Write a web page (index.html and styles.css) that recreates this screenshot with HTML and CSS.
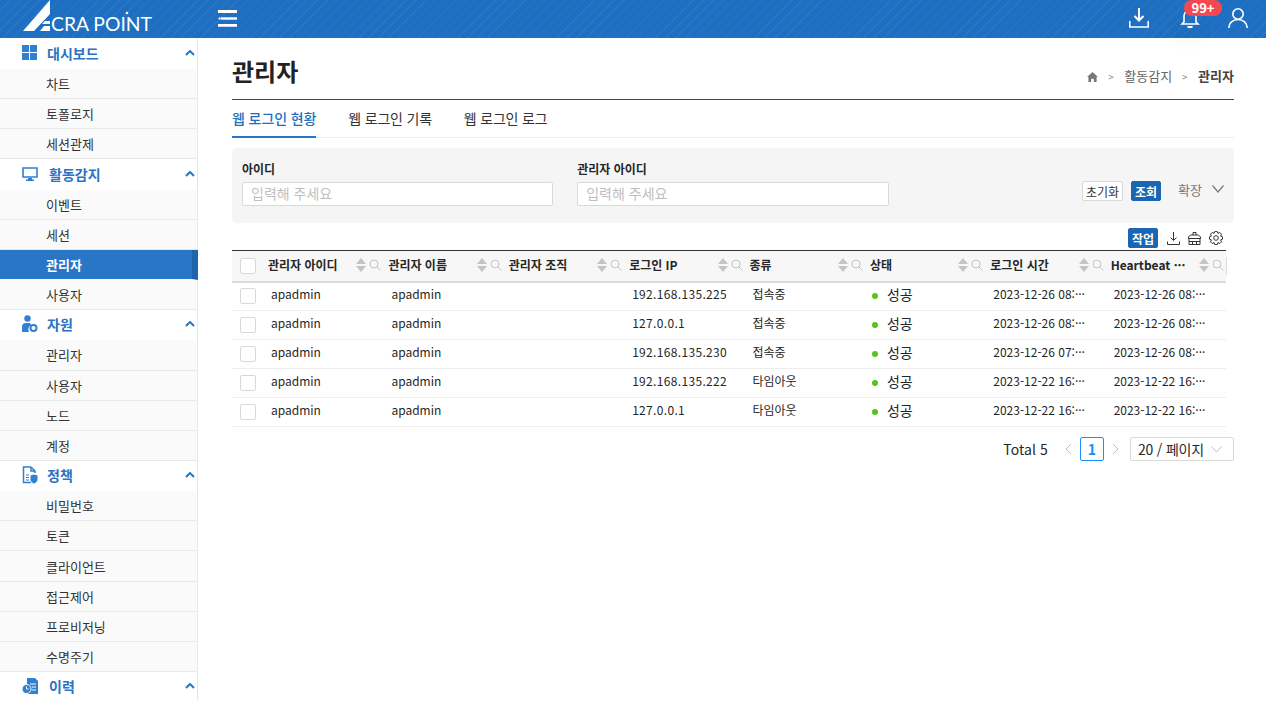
FILE: index.html
```html
<!DOCTYPE html>
<html lang="ko">
<head>
    <meta charset="UTF-8">
    <meta name="viewport" content="width=device-width, initial-scale=1.0">
    <title>관리자</title>
    <link rel="stylesheet" href="styles.css">
</head>
<body>

<svg class="defs" width="0" height="0">
    <symbol id="chev" viewBox="0 0 10 6"><path d="M1 5l4-4 4 4" fill="none" stroke="#2a75c7" stroke-width="2"/></symbol>
    <symbol id="sort" viewBox="0 0 10 14"><path d="M5 0l5 6H0zM5 14L0 8h10z" fill="#c4c4c4"/></symbol>
    <symbol id="find" viewBox="0 0 12 12"><circle cx="5" cy="5" r="4" fill="none" stroke="#c4c4c4"/><path d="M8 8l3.500 3.500" stroke="#c4c4c4"/></symbol>
</svg>

<header class="topbar">
    <svg class="logo" width="132" height="38" viewBox="0 0 132 38">
        <path d="M0 31L27 0v14L11 31zM22 21h5v3h-8zM17 31l4-5h6v5z" fill="#fff"/>
        <text x="28" y="31" class="logo-text" textLength="101" lengthAdjust="spacingAndGlyphs">CRA POINT</text>
        <circle cx="104" cy="13" r="1.300" fill="#fff"/>
    </svg>
    <svg class="menu-toggle" width="19" height="18" viewBox="0 0 19 18">
        <path d="M0 1.500h19M0 15.300h19" stroke="#fff" stroke-width="2.800"/>
        <path d="M2.500 8.500H19" stroke="#fff" stroke-width="2.400"/>
        <path d="M0 8.500l1.800-1.500v3z" fill="#fff"/>
    </svg>
    <div class="top-icons">
        <svg width="20" height="20" viewBox="0 0 20 20">
            <path d="M10 0v12M5.500 8l4.500 4.500L14.500 8" fill="none" stroke="#fff" stroke-width="2"/>
            <path d="M.8 13v6h18.400v-6" fill="none" stroke="#fff" stroke-width="1.600"/>
        </svg>
        <div class="bell">
            <svg width="20" height="20" viewBox="0 0 20 20">
                <path d="M4 14V8a6 6 0 0 1 12 0v6l2 2H2z" fill="none" stroke="#fff" stroke-width="1.600"/>
                <path d="M7.500 18h5v2h-5z" fill="#fff"/>
            </svg>
            <span class="badge">99+</span>
        </div>
        <svg width="20" height="20" viewBox="0 0 20 20">
            <circle cx="10" cy="6" r="5.200" fill="none" stroke="#fff" stroke-width="1.600"/>
            <path d="M.8 20c0-5 4-8.500 9.200-8.500s9.200 3.500 9.200 8.500" fill="none" stroke="#fff" stroke-width="1.600"/>
        </svg>
    </div>
</header>

<div class="layout">
    <nav class="sidebar">
        <div class="group">
            <svg class="group-icon" width="16" height="15" viewBox="0 0 16 15"><path d="M0 0h7v7H0zM8 0h7v7H8zM0 8h7v7H0zM8 8h7v7H8z" fill="#2f7fd3"/></svg>
            <span>대시보드</span>
            <svg class="chev" width="10" height="6"><use href="#chev"/></svg>
        </div>
        <a class="item">차트</a>
        <a class="item">토폴로지</a>
        <a class="item">세션관제</a>

        <div class="group wide">
            <svg class="group-icon" width="16" height="14" viewBox="0 0 16 14"><path d="M1 1h14v9H1z" fill="none" stroke="#2f7fd3" stroke-width="1.600"/><path d="M6 11h4v1.500h2V14H4v-1.500h2z" fill="#2f7fd3"/></svg>
            <span>활동감지</span>
            <svg class="chev" width="10" height="6"><use href="#chev"/></svg>
        </div>
        <a class="item">이벤트</a>
        <a class="item">세션</a>
        <a class="item active">관리자</a>
        <a class="item">사용자</a>

        <div class="group">
            <svg class="group-icon" width="16" height="18" viewBox="0 0 16 18"><circle cx="5.500" cy="3.500" r="3.200" fill="#2f7fd3"/><path d="M0 17v-5a4 4 0 0 1 4-4h4l1 2a5 5 0 0 0-2 7z" fill="#2f7fd3"/><circle cx="11.500" cy="13" r="3" fill="none" stroke="#2f7fd3" stroke-width="2"/></svg>
            <span>자원</span>
            <svg class="chev" width="10" height="6"><use href="#chev"/></svg>
        </div>
        <a class="item">관리자</a>
        <a class="item">사용자</a>
        <a class="item">노드</a>
        <a class="item">계정</a>

        <div class="group">
            <svg class="group-icon" width="16" height="18" viewBox="0 0 16 18"><path d="M9 1H1.500v15.500H9M9 1l4 4v2M9 1v4h4" fill="none" stroke="#2f7fd3" stroke-width="1.500"/><path d="M4 9h3M4 11.500h3M4 14h3" stroke="#2f7fd3"/><path d="M8.500 9.500l3.500-1 3.500 1v4c0 2-2 3.500-3.500 4-1.500-.5-3.500-2-3.500-4z" fill="#2f7fd3"/></svg>
            <span>정책</span>
            <svg class="chev" width="10" height="6"><use href="#chev"/></svg>
        </div>
        <a class="item">비밀번호</a>
        <a class="item">토큰</a>
        <a class="item">클라이언트</a>
        <a class="item">접근제어</a>
        <a class="item">프로비저닝</a>
        <a class="item">수명주기</a>

        <div class="group wide">
            <svg class="group-icon" width="16" height="16" viewBox="0 0 16 16"><path d="M5 0h8l3 3v13H5z" fill="#2f7fd3"/><path d="M8 6h6M10 9h4M10 12h4" stroke="#fff"/><circle cx="4.500" cy="11" r="4.500" fill="#2f7fd3" stroke="#fff"/><path d="M4.500 8.500V11h2" fill="none" stroke="#fff"/></svg>
            <span>이력</span>
            <svg class="chev" width="10" height="6"><use href="#chev"/></svg>
        </div>
    </nav>

    <main class="content">
        <div class="title-row">
            <h1>관리자</h1>
            <div class="crumbs">
                <svg width="11" height="10" viewBox="0 0 12 11"><path d="M6 0l6 5.500h-1.500V11H7.500V7.500h-3V11h-3V5.500H0z" fill="#777"/></svg>
                <span class="sep">&gt;</span>
                <span>활동감지</span>
                <span class="sep">&gt;</span>
                <b>관리자</b>
            </div>
        </div>

        <div class="tabs">
            <a class="tab on">웹 로그인 현황</a>
            <a class="tab">웹 로그인 기록</a>
            <a class="tab">웹 로그인 로그</a>
        </div>

        <form class="search">
            <label class="field">
                <span>아이디</span>
                <input placeholder="입력해 주세요">
            </label>
            <label class="field">
                <span>관리자 아이디</span>
                <input placeholder="입력해 주세요">
            </label>
            <div class="search-actions">
                <button type="button" class="btn">초기화</button>
                <button type="button" class="btn primary">조회</button>
                <span class="expand">확장
                    <svg width="12" height="8" viewBox="0 0 12 8"><path d="M.5.500L6 7l5.500-6.500" fill="none" stroke="#777" stroke-width="1.200"/></svg>
                </span>
            </div>
        </form>

        <div class="tools">
            <button type="button" class="btn primary">작업</button>
            <svg width="13" height="13" viewBox="0 0 13 13"><path d="M6.500 0v8M3.500 5.500l3 3 3-3M.5 9.500v3h12v-3" fill="none" stroke="#333"/></svg>
            <svg width="13" height="13" viewBox="0 0 13 13"><path d="M5 3V.5h3V3M.5 6.500V5l2-2h8l2 2v1.500zM1 6.500v6h11v-6M1 9.500h11M4.500 9.500v3M8.500 9.500v3" fill="none" stroke="#333"/></svg>
            <svg width="14" height="14" viewBox="0 0 14 14"><circle cx="7" cy="7" r="2.300" fill="none" stroke="#333"/><path d="M13.600 5.840v2.320l-1.980.75.87 1.930-1.650 1.650-1.930-.87-.75 1.980H5.840l-.75-1.980-1.930.87-1.650-1.650.87-1.930L.4 8.160V5.840l1.980-.75-.87-1.930 1.650-1.650 1.930.87.750-1.980h2.320l.75 1.980 1.930-.87 1.650 1.650-.87 1.930z" fill="none" stroke="#333"/></svg>
        </div>

        <table class="grid">
            <thead>
                <tr>
                    <th class="check"><i class="box"></i></th>
                    <th><div class="head"><span class="name">관리자 아이디</span><svg width="10" height="14"><use href="#sort"/></svg><svg width="12" height="12"><use href="#find"/></svg></div></th>
                    <th><div class="head"><span class="name">관리자 이름</span><svg width="10" height="14"><use href="#sort"/></svg><svg width="12" height="12"><use href="#find"/></svg></div></th>
                    <th><div class="head"><span class="name">관리자 조직</span><svg width="10" height="14"><use href="#sort"/></svg><svg width="12" height="12"><use href="#find"/></svg></div></th>
                    <th><div class="head"><span class="name">로그인 IP</span><svg width="10" height="14"><use href="#sort"/></svg><svg width="12" height="12"><use href="#find"/></svg></div></th>
                    <th><div class="head"><span class="name">종류</span><svg width="10" height="14"><use href="#sort"/></svg><svg width="12" height="12"><use href="#find"/></svg></div></th>
                    <th><div class="head"><span class="name">상태</span><svg width="10" height="14"><use href="#sort"/></svg><svg width="12" height="12"><use href="#find"/></svg></div></th>
                    <th><div class="head"><span class="name">로그인 시간</span><svg width="10" height="14"><use href="#sort"/></svg><svg width="12" height="12"><use href="#find"/></svg></div></th>
                    <th><div class="head"><span class="name">Heartbeat ···</span><svg width="10" height="14"><use href="#sort"/></svg><svg width="12" height="12"><use href="#find"/></svg></div></th>
                </tr>
            </thead>
            <tbody>
                <tr><td class="check"><i class="box"></i></td><td>apadmin</td><td>apadmin</td><td></td><td class="ip">192.168.135.225</td><td>접속중</td><td><i class="dot"></i><span class="status">성공</span></td><td>2023-12-26 08:···</td><td>2023-12-26 08:···</td></tr>
                <tr><td class="check"><i class="box"></i></td><td>apadmin</td><td>apadmin</td><td></td><td class="ip">127.0.0.1</td><td>접속중</td><td><i class="dot"></i><span class="status">성공</span></td><td>2023-12-26 08:···</td><td>2023-12-26 08:···</td></tr>
                <tr><td class="check"><i class="box"></i></td><td>apadmin</td><td>apadmin</td><td></td><td class="ip">192.168.135.230</td><td>접속중</td><td><i class="dot"></i><span class="status">성공</span></td><td>2023-12-26 07:···</td><td>2023-12-26 08:···</td></tr>
                <tr><td class="check"><i class="box"></i></td><td>apadmin</td><td>apadmin</td><td></td><td class="ip">192.168.135.222</td><td>타임아웃</td><td><i class="dot"></i><span class="status">성공</span></td><td>2023-12-22 16:···</td><td>2023-12-22 16:···</td></tr>
                <tr><td class="check"><i class="box"></i></td><td>apadmin</td><td>apadmin</td><td></td><td class="ip">127.0.0.1</td><td>타임아웃</td><td><i class="dot"></i><span class="status">성공</span></td><td>2023-12-22 16:···</td><td>2023-12-22 16:···</td></tr>
            </tbody>
        </table>

        <div class="pager">
            <span class="total">Total 5</span>
            <svg width="8" height="12" viewBox="0 0 8 12"><path d="M7 1L2 6l5 5" fill="none" stroke="#bbb"/></svg>
            <span class="page">1</span>
            <svg width="8" height="12" viewBox="0 0 8 12"><path d="M1 1l5 5-5 5" fill="none" stroke="#bbb"/></svg>
            <span class="size">20 / 페이지
                <svg width="11" height="7" viewBox="0 0 11 7"><path d="M.5.500l5 5.500 5-5.500" fill="none" stroke="#bbb"/></svg>
            </span>
        </div>
    </main>
</div>

</body>
</html>
```

FILE: styles.css
```css
* {
    box-sizing: border-box;
}
html, body {
    height: 701px;
    overflow: hidden;
}
body {
    margin: 0;
    font-family: "Noto Sans CJK KR", "Noto Sans", sans-serif;
    font-size: 13px;
    color: #262626;
    background: #fff;
}
.defs {
    position: absolute;
}

/* top bar */
.topbar {
    height: 38px;
    display: flex;
    align-items: center;
    padding-left: 23px;
    background-color: #1e6fc2;
    background-image: repeating-linear-gradient(135deg, rgba(255,255,255,0.05) 0 1px, transparent 1px 7px);
}
.logo {
    display: block;
    flex: none;
}
.logo-text {
    font-family: "Lato", sans-serif;
    font-size: 20px;
    font-weight: 400;
    fill: #fff;
}
.menu-toggle {
    flex: none;
    margin-left: 63px;
}
.top-icons {
    margin-left: auto;
    margin-right: 18px;
    margin-top: -2px;
    display: flex;
    align-items: center;
    gap: 28px;
}
.top-icons svg {
    display: block;
}
.bell {
    position: relative;
    margin-left: 3px;
    border-radius: 50%;
    box-shadow: 0 14px 18px rgba(0,0,0,0.06);
}
.badge {
    position: absolute;
    top: -8px;
    left: 4px;
    width: 38px;
    height: 16px;
    line-height: 15px;
    border-radius: 8px;
    background: #f5484f;
    color: #fff;
    font-size: 13px;
    font-weight: 700;
    text-align: center;
}

/* sidebar */
.layout {
    display: flex;
    height: 663px;
}
.sidebar {
    flex: none;
    width: 198px;
    padding-top: 0.8px;
    border-right: 1px solid #e8e8e8;
}
.group {
    height: 30.17px;
    display: flex;
    align-items: center;
    padding: 0 0 2px 22px;
    color: #2a72c4;
    font-size: 14px;
    font-weight: 700;
}
.group-icon {
    flex: none;
    width: 16px;
    margin-right: 9px;
}
.group.wide .group-icon {
    margin-right: 11px;
}
.chev {
    margin-left: auto;
    margin-right: 2px;
}
.item {
    display: flex;
    align-items: center;
    height: 30.17px;
    padding-left: 46px;
    background: #fafafa;
    border-bottom: 1px solid #e8e8e8;
    color: #333;
}
.item.active {
    margin-right: -1px;
    background: #2976c6;
    border-right: 6px solid #1f65ad;
    border-bottom-color: #fafafa;
    color: #fff;
    font-weight: 700;
}

/* main area */
.content {
    flex: 1;
    min-width: 0;
    padding: 0 32px 0 34px;
}
.title-row {
    height: 62px;
    display: flex;
    justify-content: space-between;
    align-items: center;
    padding-top: 4px;
    border-bottom: 1px solid #34495e;
}
h1 {
    margin: 0;
    font-size: 24px;
    font-weight: 700;
    color: #222;
}
.crumbs {
    display: flex;
    align-items: center;
    gap: 10px;
    padding-top: 10px;
    color: #666;
}
.crumbs svg {
    margin-top: 2px;
}
.crumbs b {
    color: #444;
}
.sep {
    width: 6px;
    margin-top: 2px;
    font-size: 10px;
    color: #888;
}

.tabs {
    display: flex;
    gap: 32px;
    height: 38px;
    border-bottom: 1px solid #eee;
}
.tab {
    height: 38px;
    line-height: 36px;
    font-size: 14px;
    letter-spacing: -0.2px;
    color: #333;
}
.tab.on {
    letter-spacing: -0.1px;
    color: #1f6fc0;
    font-weight: 500;
    border-bottom: 2px solid #2976c6;
}

.search {
    margin-top: 10px;
    height: 75px;
    display: flex;
    gap: 23.8px;
    padding: 12px 10px 0;
    background: #f5f5f5;
    border-radius: 5px;
}
.field {
    display: flex;
    flex-direction: column;
    width: 311.4px;
    font-size: 12px;
    font-weight: 700;
}
.field span {
    height: 22px;
    line-height: 18px;
}
.field input {
    width: 100%;
    height: 24px;
    padding: 0 8px 2px;
    font: 400 14px/20px "Noto Sans CJK KR", sans-serif;
    background: #fff;
    border: 1px solid #d9d9d9;
    border-radius: 2px;
}
.field input::placeholder {
    color: #bfbfbf;
}
.search-actions {
    margin-left: auto;
    display: flex;
    align-items: center;
    gap: 8px;
    height: 62px;
}
.btn {
    height: 20px;
    width: 41px;
    padding: 0;
    font: 400 12px "Noto Sans CJK KR", sans-serif;
    line-height: 15px;
    background: #fff;
    color: #333;
    border: 1px solid #d9d9d9;
    border-radius: 2px;
}
.btn.primary {
    width: 30px;
    background: #1a66b3;
    border-color: #1a66b3;
    color: #fff;
    font-weight: 700;
}
.expand {
    display: flex;
    align-items: center;
    gap: 10px;
    margin-left: 9px;
    padding-bottom: 4px;
    color: #777;
}

.tools {
    height: 27px;
    display: flex;
    align-items: center;
    justify-content: flex-end;
    gap: 8px;
    padding: 3px 11px 0 0;
}
.tools .btn {
    margin-right: 1px;
}

.grid {
    width: 994px;
    table-layout: fixed;
    border-collapse: collapse;
    border-top: 1px solid #333;
}
.grid th, .grid td {
    padding: 0;
    text-align: left;
    font-weight: 400;
}
.grid th {
    height: 31px;
    background: #f7f7f7;
    border-bottom: 2px solid #ddd;
    font-size: 12px;
}
.grid td {
    height: 29px;
    padding: 0 0 4px 8px;
    border-bottom: 1px solid #eee;
    font-size: 12px;
    line-height: 20px;
    white-space: nowrap;
    overflow: hidden;
}
.grid .check {
    width: 31px;
    padding: 0 0 0 8px;
}
.grid .ip {
    letter-spacing: 0.33px;
}
.box {
    display: block;
    width: 16px;
    height: 16px;
    background: #fff;
    border: 1px solid #d9d9d9;
    border-radius: 2px;
}
.head {
    display: flex;
    align-items: center;
    gap: 3px;
    height: 18px;
    margin-right: -1px;
    padding: 0 2px 0 5px;
    border-right: 1px solid #ddd;
}
.head > * {
    margin-bottom: 2px;
}
.head svg {
    flex: none;
}
.name {
    flex: 1;
    min-width: 0;
    font-weight: 700;
    color: #262626;
    white-space: nowrap;
}
.dot {
    display: inline-block;
    width: 6px;
    height: 6px;
    margin: 0 9px 1px -1px;
    border-radius: 50%;
    background: #52c41a;
    vertical-align: middle;
}
.status {
    font-size: 14px;
}

.pager {
    display: flex;
    align-items: center;
    justify-content: flex-end;
    gap: 8px;
    margin-top: 10px;
    height: 24px;
}
.total {
    font-size: 14px;
    letter-spacing: 0.1px;
    margin-right: 8px;
}
.page {
    width: 24px;
    height: 24px;
    line-height: 22px;
    text-align: center;
    color: #1890ff;
    font-size: 14px;
    font-weight: 700;
    border: 1px solid #1890ff;
    border-radius: 2px;
}
.size {
    display: flex;
    align-items: center;
    justify-content: space-between;
    width: 104px;
    height: 24px;
    margin-left: 2px;
    padding: 0 11px 0 7px;
    font-size: 14px;
    letter-spacing: -0.2px;
    border: 1px solid #d9d9d9;
    border-radius: 2px;
}
```
